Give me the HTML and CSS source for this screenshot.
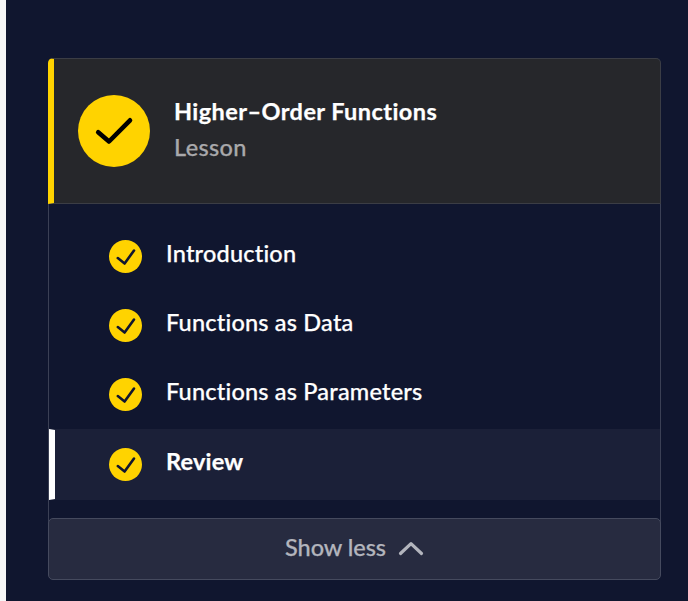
FILE: index.html
```html
<!DOCTYPE html>
<html lang="en">
<head>
<meta charset="utf-8">
<title>Higher-Order Functions</title>
<link rel="stylesheet" href="styles.css">
</head>
<body>
<svg class="symbols" aria-hidden="true">
  <symbol id="check" viewBox="0 0 33 33"><circle cx="16.5" cy="16.5" r="16.5" fill="#ffd300"/><path d="M8.8 18.1 L15.6 23.5 L25 10.5" fill="none" stroke="#10162f" stroke-width="2.6" stroke-linecap="round" stroke-linejoin="round"/></symbol>
</svg>
<main class="card">
  <header class="lesson">
    <svg class="badge" viewBox="0 0 72 72"><circle cx="36" cy="36" r="36" fill="#ffd300"/><path d="M20.2 37.2 L31 46.5 L52 25.3" fill="none" stroke="#000" stroke-width="4.6" stroke-linecap="round" stroke-linejoin="round"/></svg>
    <div class="heading">
      <h1 class="title">Higher–Order Functions</h1>
      <p class="kind">Lesson</p>
    </div>
  </header>
  <ul class="steps">
    <li class="step"><svg class="check"><use href="#check"/></svg><span>Introduction</span></li>
    <li class="step"><svg class="check"><use href="#check"/></svg><span>Functions as Data</span></li>
    <li class="step"><svg class="check"><use href="#check"/></svg><span>Functions as Parameters</span></li>
    <li class="step current"><svg class="check"><use href="#check"/></svg><span>Review</span></li>
  </ul>
  <button class="toggle"><span>Show less</span><svg class="chevron" viewBox="0 0 26 15"><path d="M2.5 12.5 L13 2.6 L23.5 12.5" fill="none" stroke="#b3b5bd" stroke-width="3.2" stroke-linecap="round" stroke-linejoin="round"/></svg></button>
</main>
</body>
</html>
```
FILE: styles.css
```css
* { box-sizing: border-box; }
body {
  margin: 0;
  height: 601px;
  overflow: hidden;
  padding: 58px 27px 0 42px;
  border-left: 6px solid #f7f7f7;
  background: #10162f;
  color: #fff;
  font: 500 23.5px/36px Lato, "Liberation Sans", sans-serif;
  letter-spacing: 0.2px;
  font-variant-ligatures: none;
  -webkit-text-stroke: 0.25px;
}
.symbols { position: absolute; width: 0; height: 0; }
.card {
  display: flex;
  flex-direction: column;
  height: 522px;
}
.lesson {
  display: flex;
  gap: 24px;
  height: 146px;
  padding: 36px 0 0 24px;
  border: 1px solid #3b3d45;
  border-left: 6px solid #ffd300;
  border-radius: 5px 5px 0 0;
  background: #26272b;
}
.badge { width: 72px; height: 72px; }
.heading { margin-top: -2px; }
.title, .kind { margin: 0; font-size: 23.5px; line-height: 36px; }
.title { font-weight: 700; letter-spacing: 0.43px; }
.kind { color: #a9a9ab; letter-spacing: 0.35px; }
.steps {
  flex: 1;
  margin: 0 0 -5px;
  padding: 18px 0 0;
  list-style: none;
  border: solid #3b4055;
  border-width: 0 1px;
}
.step {
  display: flex;
  align-items: center;
  gap: 24px;
  height: 69px;
  padding-left: 60px;
}
.step span { margin-top: -7px; }
.check { width: 33px; height: 33px; }
.current {
  height: 71px;
  padding-left: 54px;
  border: solid transparent;
  border-width: 1px 0 1px 6px;
  border-left-color: #fff;
  background: #1b2038;
  font-weight: 700;
  letter-spacing: 0.2px;
}
.toggle {
  display: flex;
  align-items: center;
  justify-content: center;
  gap: 12px;
  height: 62px;
  padding: 0;
  border: 1px solid #454a5e;
  border-radius: 5px;
  background: #272b40;
  color: #b3b5bd;
  font: inherit;
  letter-spacing: -0.05px;
}
.toggle span { margin-top: -4px; }
.chevron { width: 26px; height: 15px; margin-top: -2px; }
```
